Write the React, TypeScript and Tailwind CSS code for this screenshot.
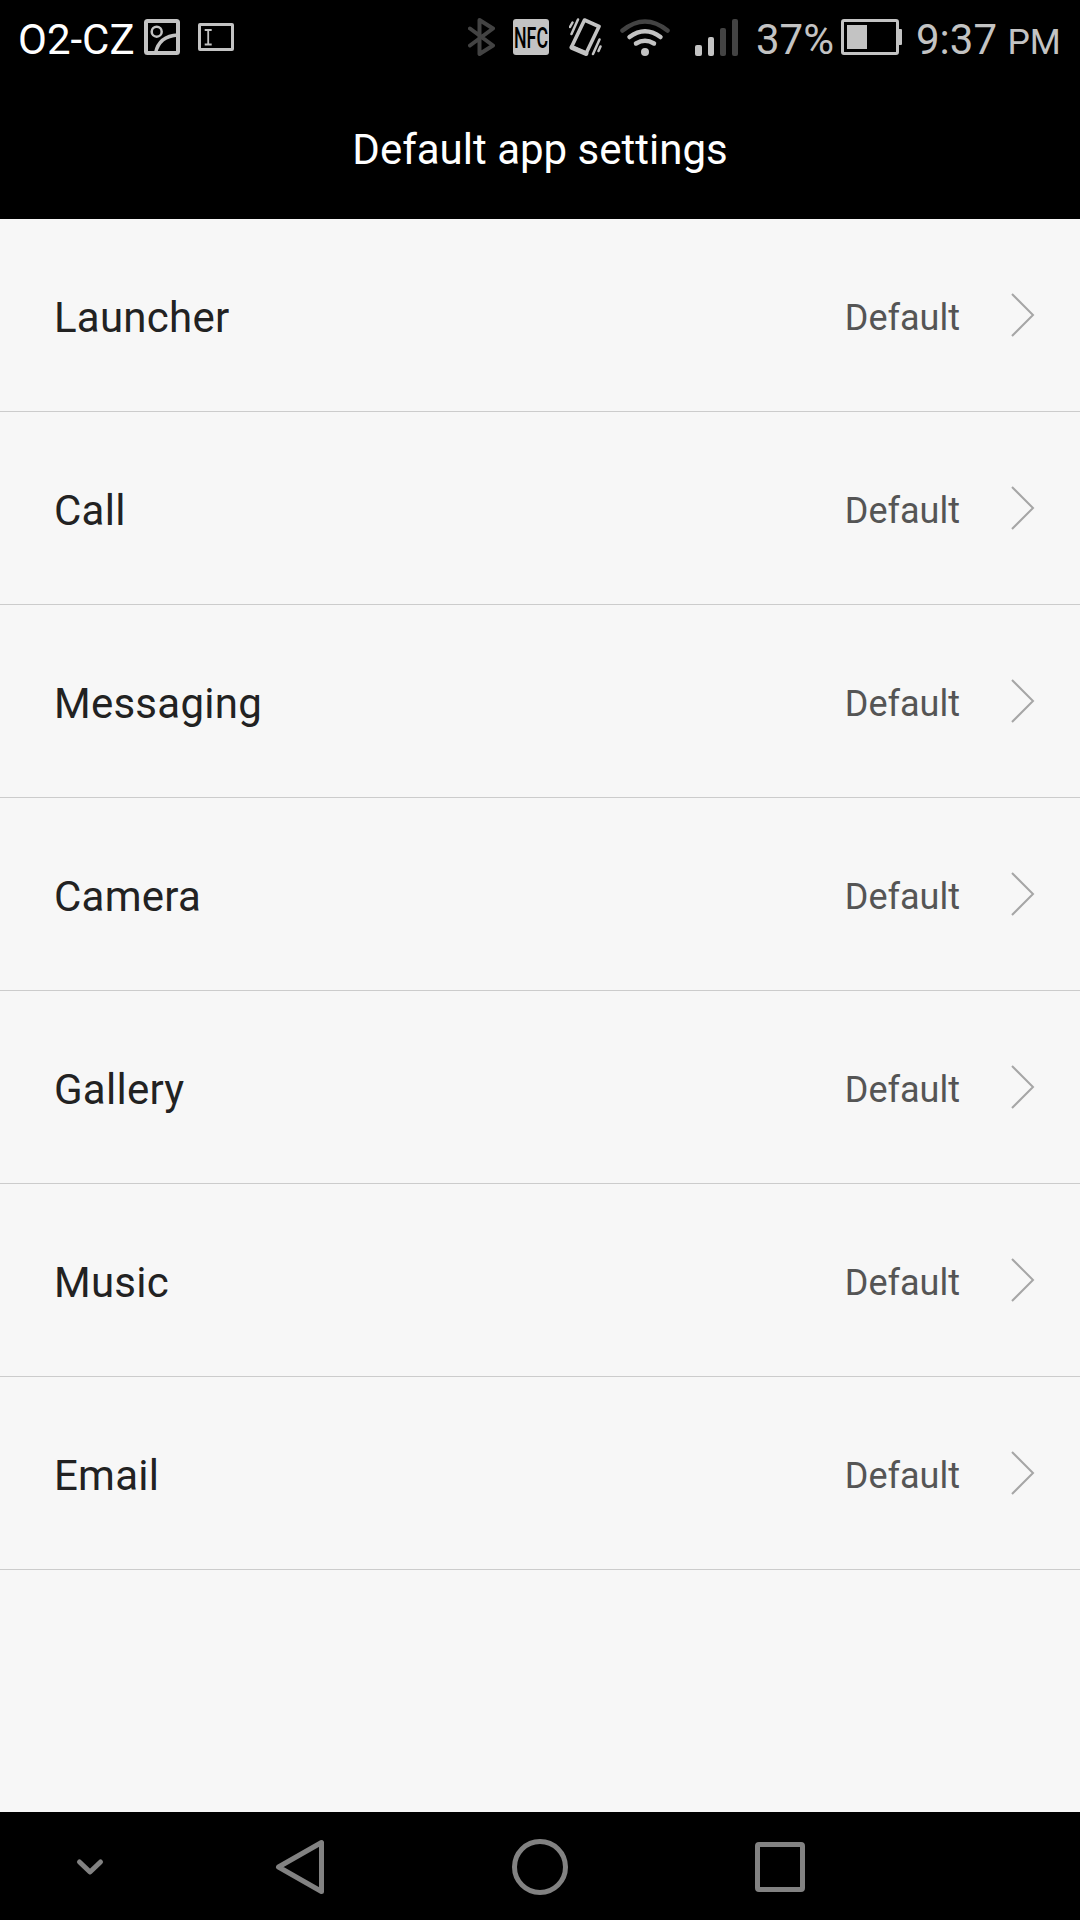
import { ReactNode } from "react";

const apps = ["Launcher", "Call", "Messaging", "Camera", "Gallery", "Music", "Email"];

const BluetoothIcon = () => (
  <svg className="ml-[234px] h-[38px] w-[27px]" viewBox="468 18 27 38" fill="none" stroke="#434343" strokeWidth="4" strokeLinecap="round" strokeLinejoin="round">
    <path d="M470 28.500 493 45.500 479.500 54V20L493 28.500 470 45.500" />
  </svg>
);

const NfcIcon = () => (
  <svg className="ml-[18px] mt-px h-9 w-9 overflow-visible" viewBox="0 0 36 36">
    <rect width="36" height="36" rx="3" fill="#c3c3c3" />
    <text x="1" y="28.700" fontSize="29" fontFamily="Roboto, sans-serif" fontWeight="500" textLength="34" lengthAdjust="spacingAndGlyphs" fill="#000">
      NFC
    </text>
  </svg>
);

const VibrateIcon = () => (
  <svg className="ml-5 h-[38px] w-[33px]" viewBox="569 18 33 38" fill="none" stroke="#c3c3c3" strokeLinecap="round" strokeLinejoin="round">
    <path d="M584.500 20 599 26.500 586 53.500 571.500 47Z" strokeWidth="3.600" />
    <path d="M572 47.500 586 53.500" strokeWidth="4.800" />
    <path d="M578 19.500 571.500 34M572.500 22.500 570 27M599.500 39.500 593 54M600.500 46.500 598.500 51" strokeWidth="2.500" />
  </svg>
);

const WifiIcon = () => (
  <svg className="ml-[18px] h-[38px] w-[50px]" viewBox="620 18 50 38" fill="none" strokeWidth="4.500" strokeLinecap="round">
    <path d="M622.500 30.500Q645 12.500 667.500 30.500" stroke="#434343" />
    <path d="M629.500 37Q645 25.500 660.500 37M636 43.500Q645 38 654 43.500" stroke="#c3c3c3" />
    <circle cx="645" cy="52" r="4" fill="#c3c3c3" />
  </svg>
);

const SignalIcon = () => (
  <svg className="ml-[25px] h-[38px] w-[43px]" viewBox="695 18 43 38">
    <rect x="695" y="45" width="7" height="11" rx="2" fill="#c3c3c3" />
    <rect x="708" y="37" width="6" height="19" rx="2" fill="#c3c3c3" />
    <rect x="720" y="28" width="6" height="28" rx="2" fill="#434343" />
    <rect x="732" y="19" width="6" height="37" rx="2" fill="#434343" />
  </svg>
);

const StatusBar = () => (
  <div className="flex h-[73px] items-start pt-[18px] text-[42px] leading-[43px] text-[#c3c3c3]">
    <span className="ml-[18px] w-[126px] whitespace-nowrap text-white">O2-CZ</span>
    <svg className="mt-px h-9 w-9" viewBox="144 19 36 36" fill="none" stroke="#c3c3c3">
      <rect x="146" y="21" width="32" height="32" rx="1.500" strokeWidth="4" />
      <circle cx="156.700" cy="31.700" r="5" strokeWidth="2.500" />
      <path d="M155.500 53Q159 36 178 35" strokeWidth="3.500" />
    </svg>
    <svg className="ml-[18px] mt-[5px] h-7 w-9" viewBox="198 23 36 28" fill="none" stroke="#c3c3c3">
      <rect x="199.500" y="24.500" width="33" height="25" rx="0.500" strokeWidth="3" />
      <path d="M204.700 30H211.700M204.700 44.500H211.700M208.200 30V44.500" strokeWidth="1.800" />
    </svg>
    <BluetoothIcon />
    <NfcIcon />
    <VibrateIcon />
    <WifiIcon />
    <SignalIcon />
    <span className="ml-[18px] w-[85px] whitespace-nowrap">37%</span>
    <svg className="mt-px h-9 w-[61px]" viewBox="0 0 61 36">
      <rect x="1.500" y="1.500" width="55" height="33" rx="1.500" fill="none" stroke="#c3c3c3" strokeWidth="3" />
      <path d="M6 6H26V30H6ZM58 10H60Q61 10 61 11V25Q61 26 60 26H58Z" fill="#c3c3c3" />
    </svg>
    <span className="ml-[14px] whitespace-nowrap">
      9:37 <span className="text-[35.500px]">PM</span>
    </span>
  </div>
);

const SettingRow = ({ name }: { name: string }) => (
  <li className="flex h-[193px] items-center border-b border-[#cccccc] pl-[54px] pr-[45px]">
    <span className="flex-1 pt-1.5 text-[42px] leading-[50px] tracking-[0.25px] text-[#222222]">{name}</span>
    <span className="mr-[51px] pt-1.5 text-[36px] leading-[50px] text-[#555555]">Default</span>
    <svg className="h-[44px] w-6" viewBox="0 0 24 44" fill="none" stroke="#a6a6a6" strokeWidth="2">
      <path d="M1 1 22 22 1 43" />
    </svg>
  </li>
);

const NavButton = ({ children }: { children: ReactNode }) => (
  <button className="flex items-center justify-center pt-0.5">
    <svg className="h-[60px] w-[60px]" viewBox="-30 -30 60 60" fill="none" stroke="#828282" strokeWidth="5" strokeLinecap="round" strokeLinejoin="round">
      {children}
    </svg>
  </button>
);

export default function App() {
  return (
    <div className="flex h-[1920px] w-[1080px] flex-col overflow-hidden bg-[#f7f7f7] font-[Roboto,sans-serif]">
      <header className="h-[219px] bg-black">
        <StatusBar />
        <h1 className="pt-12 text-center text-[42px] leading-[58px] text-white">Default app settings</h1>
      </header>
      <ul className="flex-1">
        {apps.map((name) => (
          <SettingRow key={name} name={name} />
        ))}
      </ul>
      <nav className="grid h-[108px] grid-cols-[180px_240px_240px_240px] bg-black">
        <NavButton>
          <path d="M-10.500 -5 0 5 10.500 -5" />
        </NavButton>
        <NavButton>
          <path d="M-21.500 0 21.500 -24.500V24.500Z" />
        </NavButton>
        <NavButton>
          <circle r="25.500" />
        </NavButton>
        <NavButton>
          <rect x="-22.500" y="-22.500" width="45" height="45" rx="1.500" />
        </NavButton>
      </nav>
    </div>
  );
}
